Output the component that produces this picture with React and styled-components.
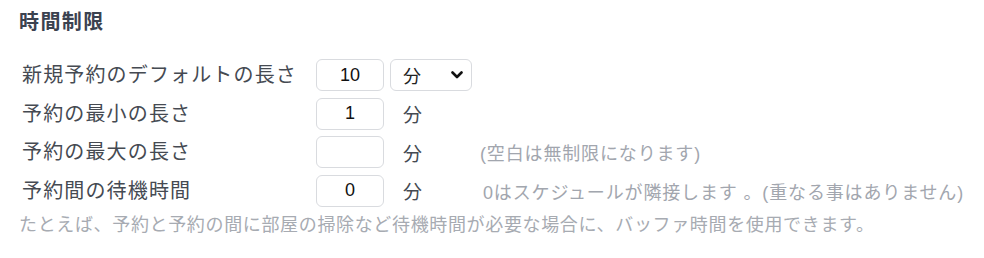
import React from 'react'
import styled, { createGlobalStyle } from 'styled-components'

const GlobalStyle = createGlobalStyle`
  body {
    margin: 0;
    background: #ffffff;
    font-family: "Liberation Sans", "Noto Sans CJK JP", sans-serif;
  }
`

const rows = [
  { label: '新規予約のデフォルトの長さ', value: '10', select: true },
  { label: '予約の最小の長さ', value: '1' },
  { label: '予約の最大の長さ', value: '', note: '(空白は無制限になります)' },
  { label: '予約間の待機時間', value: '0', note: '0はスケジュールが隣接します 。(重なる事はありません)', noteIndent: 3 },
]

const Chevron = () => (
  <svg width="12" height="8" viewBox="0 0 12 8" fill="none">
    <polyline points="1.5,1.5 6,6 10.5,1.5" stroke="#111" strokeWidth="2.6" strokeLinecap="round" strokeLinejoin="round" />
  </svg>
)

const App = () => {
  return (
    <Wrapper>
      <GlobalStyle />
      <Title>時間制限</Title>
      <Form>
        {rows.map((row) => (
          <Row key={row.label}>
            <Label>{row.label}</Label>
            <NumberBox>{row.value}</NumberBox>
            {row.select ? (
              <Select>
                <span>分</span>
                <Chevron />
              </Select>
            ) : (
              <Unit>分</Unit>
            )}
            {row.note && <Note $indent={row.noteIndent}>{row.note}</Note>}
          </Row>
        ))}
      </Form>
      <Footer>たとえば、予約と予約の間に部屋の掃除など待機時間が必要な場合に、バッファ時間を使用できます。</Footer>
    </Wrapper>
  )
}

export default App

const Wrapper = styled.div`
  padding: 8px 19px 0;
`

const Title = styled.h5`
  margin: 0 0 23px;
  font-size: 20px;
  line-height: 28px;
  font-weight: 700;
  letter-spacing: 1.4px;
  color: #3b4250;
`

const Form = styled.div`
  display: flex;
  flex-direction: column;
  gap: 6.5px;
  padding-left: 3px;
`

const Row = styled.div`
  display: flex;
  align-items: center;
  height: 32px;
`

const Label = styled.div`
  width: 294px;
  font-size: 20px;
  line-height: 30px;
  letter-spacing: 1.15px;
  color: #454a52;
  white-space: nowrap;
`

const NumberBox = styled.div`
  box-sizing: border-box;
  width: 68px;
  height: 32px;
  border: 1px solid #d9dbdf;
  border-radius: 6px;
  display: flex;
  align-items: center;
  justify-content: center;
  font-size: 18px;
  color: #111;
`

const Select = styled.div`
  box-sizing: border-box;
  width: 82px;
  height: 32px;
  margin-left: 6px;
  padding: 0 8px 0 12px;
  border: 1px solid #d9dbdf;
  border-radius: 6px;
  display: flex;
  align-items: center;
  justify-content: space-between;
  font-size: 18px;
  color: #222;
`

const Unit = styled.div`
  box-sizing: border-box;
  width: 82px;
  margin-left: 6px;
  padding-left: 13px;
  font-size: 19px;
  color: #454a52;
`

const Note = styled.div`
  margin-left: ${(p) => 8 + (p.$indent || 0)}px;
  font-size: 18px;
  letter-spacing: 0.85px;
  color: #a2a6ae;
  white-space: nowrap;
`

const Footer = styled.div`
  margin-top: 6px;
  font-size: 18px;
  line-height: 24px;
  letter-spacing: 0.65px;
  color: #a7abb2;
  white-space: nowrap;
`
